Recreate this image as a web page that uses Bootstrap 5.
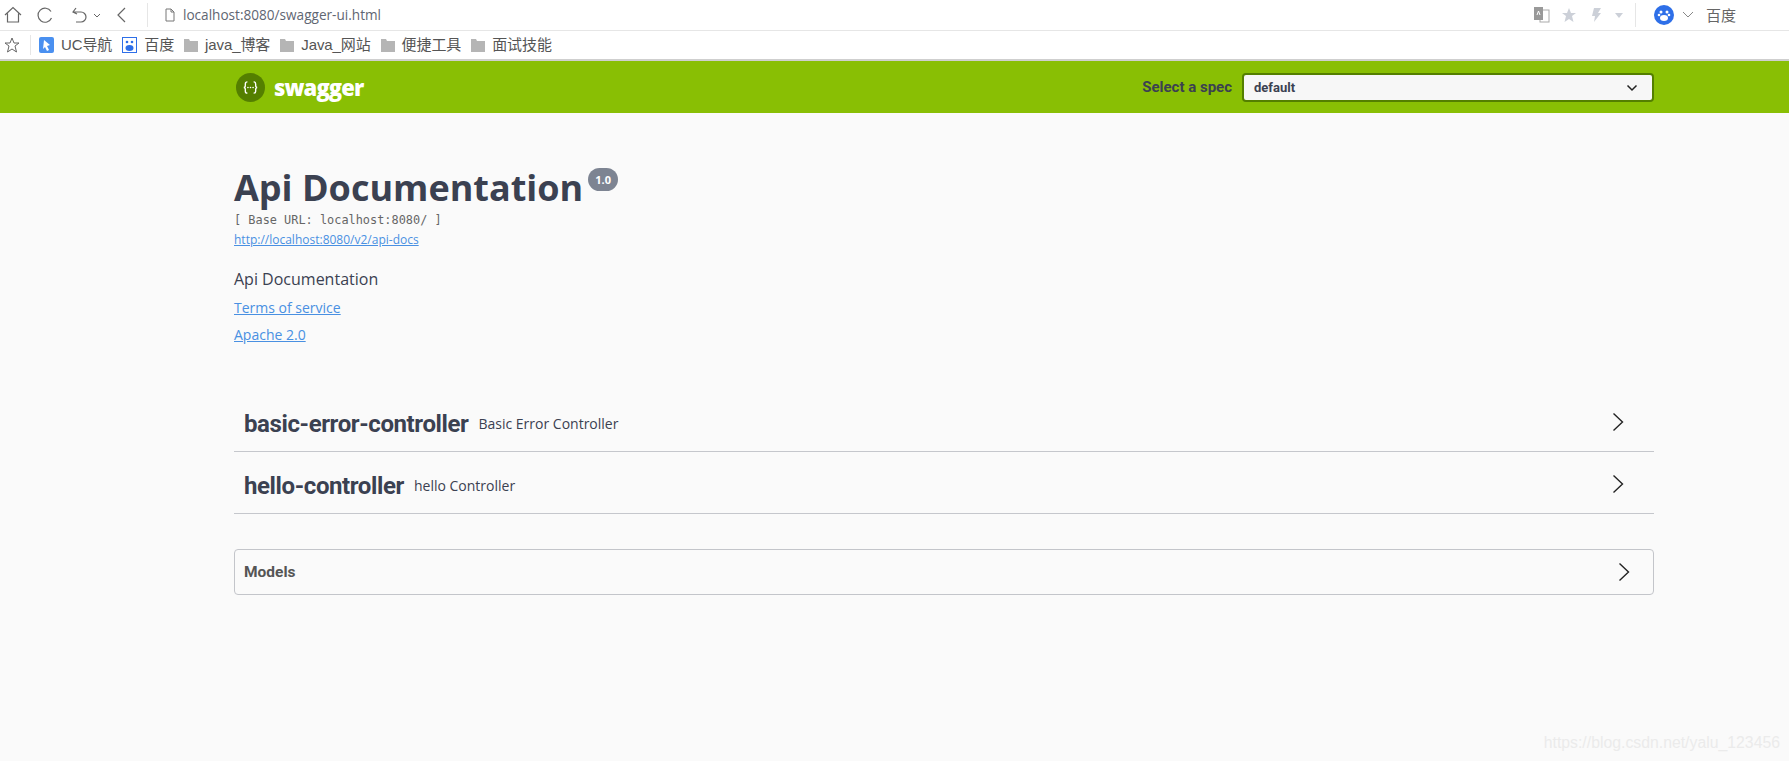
<!DOCTYPE html>
<html lang="en">
<head>
<meta charset="utf-8">
<title>Swagger UI</title>
<link rel="stylesheet" href="https://cdn.jsdelivr.net/npm/bootstrap@5.3.0/dist/css/bootstrap.min.css">
<style>
html,body{height:761px;overflow:hidden}
body{background:#fafafa;font-family:"Open Sans","Noto Sans CJK SC",sans-serif;color:#3b4151}
.chrome-bar{height:31px;background:#fff;border-bottom:1px solid #e6e6e6;padding-left:3px;color:#666}
.chrome-sep{width:1px;height:24px;background:#e6e6e6}
.url-text{font-family:"Open Sans",sans-serif;font-size:13.6px;color:#5f6672;margin-left:7px}
.baidu-word{font-size:15px;color:#666;font-family:"Noto Sans CJK SC",sans-serif}
.g8{margin-left:8px}.g12{margin-left:12px}.g14{margin-left:14px}.g15{margin-left:15px}.g16{margin-left:16px}.g18{margin-left:18px}
.tool-end{margin-right:53px}
.mark-bar{height:30px;background:#fff;border-bottom:2px solid #cfcfcf;padding-left:4px;font-family:"Liberation Sans","Noto Sans CJK SC",sans-serif;font-size:15px;color:#555;letter-spacing:-.1px}
.mark-star{margin-right:10px}
.mark-sep{width:1px;height:20px;background:#e6e6e6;margin-right:8px}
.mark-item{display:flex;align-items:center;gap:7px;margin-right:10px;white-space:nowrap}
.top-strip{height:52px;background:#89bf04}
.wrap-box{width:1420px;margin-left:234px}
.logo-mark{margin:0 9px 0 2px}
.logo-word{font-family:"Open Sans",sans-serif;font-weight:800;font-size:22px;color:#fff;letter-spacing:-.9px;line-height:1}
.spec-label{font-family:"Roboto",sans-serif;font-weight:700;font-size:15px;color:#3b4151;white-space:nowrap;margin-right:10px;padding-top:1px}
.spec-box{width:412px;height:29px;background:#f7f7f7;border:2px solid #547f00;border-radius:4px;padding:1px 14px 0 10px;font-family:"Roboto",sans-serif;font-weight:700;font-size:13px;color:#3b4151}
.info-head{padding-top:52px}
.api-title{font-family:"Open Sans",sans-serif;font-weight:700;font-size:36px;line-height:45px;color:#3b4151;margin:0}
.ver-tag{background:#7d8492;color:#fff;font-family:"Open Sans",sans-serif;font-weight:700;font-size:11px;border-radius:57px;padding:5px 7px;line-height:13px;height:23px;align-self:flex-start;margin:3px 0 0 5px}
.base-url{font-family:"DejaVu Sans Mono",monospace;font-size:11.9px;line-height:15px;color:#666;margin-top:3px}
.spec-link{display:block;font-size:12px;line-height:16px;color:#4990e2;margin-top:4px}
.desc-text{font-size:16px;line-height:22px;margin-top:20px}
.info-link{display:block;font-size:14px;line-height:19px;color:#4990e2;margin-top:8px}
.ctrl-row{height:62px;border-bottom:1px solid #c5c7cc;padding:2px 10px 0}
.ctrl-first{margin-top:46px}
.ctrl-name{font-family:"Roboto",sans-serif;font-weight:700;font-size:24px;color:#3b4151;letter-spacing:-.39px;line-height:1;margin-top:5px}
.ctrl-desc{font-size:14px;margin:3px 0 0 10px;color:#3b4151}
.chev{margin-right:20px;margin-left:auto;display:block}
.model-box{height:46px;margin-top:35px;border:1px solid #c3c5ca;border-radius:4px;padding:0 9px}
.model-name{font-family:"Roboto",sans-serif;font-weight:700;font-size:15.5px;color:#555;margin-top:2px}
.model-chev{margin-left:auto;margin-right:14px}
.watermark{position:absolute;right:9px;bottom:6px;font-family:"Liberation Sans",sans-serif;font-size:15.8px;color:#ebebeb}
</style>
</head>
<body>
<div class="chrome-bar d-flex align-items-center">
  <svg width="20" height="20" viewBox="0 0 20 20" fill="none" stroke="#666" stroke-width="1.2"><path d="M2 10 10 2.500 18 10M4.500 8.500V17h11V8.500"/></svg>
  <svg class="g12" width="20" height="20" viewBox="0 0 20 20" fill="none" stroke="#666" stroke-width="1.2"><path d="M16 6.500A7 7 0 1 0 16.500 13"/></svg>
  <svg class="g16" width="22" height="20" viewBox="0 0 22 20" fill="none" stroke="#666" stroke-width="1.2"><path d="M5 3 2 7l4 2M2 7h8a5 5 0 0 1 0 10H5"/></svg>
  <svg width="8" height="20" viewBox="0 0 8 20" fill="none" stroke="#666"><path d="M1 9l3 3 3-3"/></svg>
  <svg class="g14" width="14" height="20" viewBox="0 0 14 20" fill="none" stroke="#666" stroke-width="1.2"><path d="M10 3 3 10l7 7"/></svg>
  <div class="chrome-sep g18"></div>
  <svg class="g16" width="12" height="14" viewBox="0 0 12 14" fill="none" stroke="#777"><path d="M2 1h5l3 3v9H2zM7 1v3h3"/></svg>
  <span class="url-text">localhost:8080/swagger-ui.html</span>
  <div class="ms-auto d-flex align-items-center tool-end">
    <svg width="16" height="16" viewBox="0 0 16 16"><rect x="6" y="3" width="9" height="12" fill="#fff" stroke="#aaa"/><rect width="9" height="13" fill="#999"/><path d="M3 8l1.500-4L6 8" fill="none" stroke="#fff"/></svg>
    <svg class="g12" width="14" height="14" viewBox="0 0 14 14" fill="#ccd0d8"><path d="M7 0l2 5h5l-4 3 1.500 6L7 11l-4.500 3L4 8 0 5h5z"/></svg>
    <svg class="g15" width="10" height="14" viewBox="0 0 10 14" fill="#ccd0d8"><path d="M3 0h7L7 5h3L3 14l1-6H1z"/></svg>
    <svg class="g14" width="8" height="5" viewBox="0 0 8 5" fill="#ccd0d8"><path d="M0 0h8L4 5z"/></svg>
    <div class="chrome-sep g12"></div>
    <svg class="g18" width="20" height="20" viewBox="0 0 20 20"><circle cx="10" cy="10" r="10" fill="#2e6fe8"/><ellipse cx="10" cy="13" rx="4" ry="3" fill="#fff"/><circle cx="7" cy="7" r="1.500" fill="#fff"/><circle cx="13" cy="7" r="1.500" fill="#fff"/><circle cx="5" cy="10" r="1.300" fill="#fff"/><circle cx="15" cy="10" r="1.300" fill="#fff"/></svg>
    <svg class="g8" width="12" height="8" viewBox="0 0 12 8" fill="none" stroke="#888"><path d="M1 1l5 5 5-5"/></svg>
    <span class="g12 baidu-word">百度</span>
  </div>
</div>
<div class="mark-bar d-flex align-items-center">
  <svg class="mark-star" width="16" height="16" viewBox="0 0 16 16" fill="none" stroke="#666"><path d="M8 1l2 5h5l-4 3 1.500 6L8 12l-4.500 3L5 9 1 6h5z"/></svg>
  <div class="mark-sep"></div>
  <div class="mark-item"><svg width="15" height="16" viewBox="0 0 15 16"><rect width="15" height="16" rx="2" fill="#4a90f0"/><path d="M5 3l6 5-3 1 2 4-2 1-2-4-2 2z" fill="#fff"/></svg>UC导航</div>
  <div class="mark-item"><svg width="15" height="16" viewBox="0 0 15 16"><rect x=".5" y=".5" width="14" height="15" fill="#fff" stroke="#2e6fe8"/><ellipse cx="7.500" cy="11" rx="4" ry="3" fill="#2e6fe8"/><circle cx="5" cy="5" r="1.300" fill="#2e6fe8"/><circle cx="10" cy="5" r="1.300" fill="#2e6fe8"/></svg>百度</div>
  <div class="mark-item"><svg width="14" height="13" viewBox="0 0 14 13"><path d="M0 0h5l1 2h8v11H0z" fill="#b5b5b5"/></svg>java_博客</div>
  <div class="mark-item"><svg width="14" height="13" viewBox="0 0 14 13"><path d="M0 0h5l1 2h8v11H0z" fill="#b5b5b5"/></svg>Java_网站</div>
  <div class="mark-item"><svg width="14" height="13" viewBox="0 0 14 13"><path d="M0 0h5l1 2h8v11H0z" fill="#b5b5b5"/></svg>便捷工具</div>
  <div class="mark-item"><svg width="14" height="13" viewBox="0 0 14 13"><path d="M0 0h5l1 2h8v11H0z" fill="#b5b5b5"/></svg>面试技能</div>
</div>
<div class="top-strip">
  <div class="wrap-box h-100 d-flex align-items-center">
    <svg class="logo-mark" width="29" height="29" viewBox="0 0 28 28"><circle cx="14" cy="14" r="14" fill="#547f00"/><path d="M11 8.500q-2 0-2 2v1.500q0 2-1.500 2 1.500 0 1.500 2v1.500q0 2 2 2M17 8.500q2 0 2 2v1.500q0 2 1.500 2-1.500 0-1.500 2v1.500q0 2-2 2" fill="none" stroke="#fff" stroke-width="1.300"/><circle cx="11.500" cy="14" r=".8" fill="#fff"/><circle cx="14" cy="14" r=".8" fill="#fff"/><circle cx="16.500" cy="14" r=".8" fill="#fff"/></svg>
    <span class="logo-word">swagger</span>
    <span class="spec-label ms-auto">Select a spec</span>
    <div class="spec-box d-flex align-items-center justify-content-between">
      <span>default</span>
      <svg width="12" height="8" viewBox="0 0 12 8" fill="none" stroke="#222" stroke-width="1.500"><path d="M1.500 1.500 6 6l4.500-4.500"/></svg>
    </div>
  </div>
</div>
<div class="wrap-box">
  <div class="info-head">
    <div class="d-flex">
      <h1 class="api-title">Api Documentation</h1>
      <span class="ver-tag">1.0</span>
    </div>
    <div class="base-url">[ Base URL: localhost:8080/ ]</div>
    <a class="spec-link" href="#">http://localhost:8080/v2/api-docs</a>
    <div class="desc-text">Api Documentation</div>
    <a class="info-link" href="#">Terms of service</a>
    <a class="info-link" href="#">Apache 2.0</a>
  </div>
  <div class="ctrl-row ctrl-first d-flex align-items-center">
    <span class="ctrl-name">basic-error-controller</span><span class="ctrl-desc">Basic Error Controller</span>
    <svg class="chev" width="12" height="20" viewBox="0 0 12 20" fill="none" stroke="#222" stroke-width="1.400"><path d="M1.500 1.500 10.500 10l-9 8.500"/></svg>
  </div>
  <div class="ctrl-row d-flex align-items-center">
    <span class="ctrl-name">hello-controller</span><span class="ctrl-desc">hello Controller</span>
    <svg class="chev" width="12" height="20" viewBox="0 0 12 20" fill="none" stroke="#222" stroke-width="1.400"><path d="M1.500 1.500 10.500 10l-9 8.500"/></svg>
  </div>
  <div class="model-box d-flex align-items-center">
    <span class="model-name">Models</span>
    <svg class="model-chev" width="12" height="20" viewBox="0 0 12 20" fill="none" stroke="#222" stroke-width="1.400"><path d="M1.500 1.500 10.500 10l-9 8.500"/></svg>
  </div>
</div>
<div class="watermark">https://blog.csdn.net/yalu_123456</div>
</body>
</html>
